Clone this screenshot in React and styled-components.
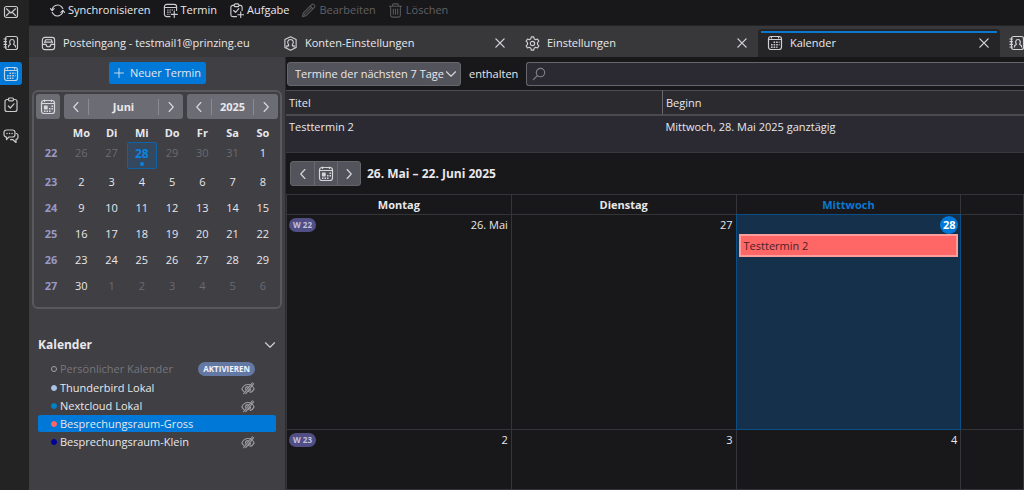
import { useState } from "react";
import styled, { createGlobalStyle, css } from "styled-components";

const GlobalStyle = createGlobalStyle`
  * {
    box-sizing: border-box;
  }

  body {
    margin: 0;
    background: #18181a;
    color: #e8e8ec;
    font-family: "Open Sans", "Noto Sans", sans-serif;
    font-size: 11px;
    line-height: 16px;
  }

  button, input, select {
    font: inherit;
    color: inherit;
  }

  button {
    padding: 0;
    border: none;
    background: none;
    cursor: pointer;
  }
`;

// Icons
const Svg = styled.svg`
  flex: none;
  display: block;
  width: ${(p) => p.$size || 16}px;
  height: ${(p) => p.$size || 16}px;
  fill: none;
  stroke: currentColor;
  stroke-width: ${(p) => p.$weight || 1.2};
  stroke-linecap: round;
  stroke-linejoin: round;
  opacity: 0.88;
`;

const Icon = ({ size, weight, children }) => (
  <Svg viewBox="0 0 16 16" $size={size} $weight={weight} aria-hidden="true">
    {children}
  </Svg>
);

const MailIcon = () => (
  <Icon>
    <rect x="1.5" y="2.5" width="13" height="11" rx="2" />
    <path d="M3.5 4.8 8 9l4.5-4.2M3.5 11.5l3-3M12.5 11.5l-3-3" />
  </Icon>
);

const BookIcon = () => (
  <Icon>
    <rect x="2.5" y="1.5" width="12" height="13" rx="2" />
    <path d="M1 4h2.5M1 6.7h2.5M1 9.4h2.5M1 12h2.5" />
    <path d="M5.5 12v-.8c0-1.2 1.4-1.2 1.9-2C6.3 8 6.3 4.5 9 4.5S11.7 8 10.6 9.2c.5.8 1.9.8 1.9 2v.8" />
  </Icon>
);

const CalendarIcon = () => (
  <Icon>
    <rect x="1.5" y="1.5" width="13" height="13" rx="2.5" />
    <path d="M1.5 4.5h13M4.5 2v1M11.5 2v1" />
    <path
      strokeWidth="1.6"
      strokeLinecap="butt"
      strokeDasharray="1.6 1"
      d="M6.5 7.2h6M4 9.7h8.5M4 12.2h6.5"
    />
  </Icon>
);

const TodayIcon = () => (
  <Icon>
    <rect x="1.5" y="1.5" width="13" height="13" rx="2.5" />
    <path d="M1.5 4.5h13M4.5 1v1.5M11.5 1v1.5" />
    <rect x="4.5" y="7.2" width="2.6" height="2.6" fill="currentColor" />
    <path
      strokeWidth="1.5"
      strokeLinecap="butt"
      strokeDasharray="1.5 1"
      d="M11.5 7.2h1.5M9 9.7h4M4 12.2h6.5"
    />
  </Icon>
);

const TaskIcon = () => (
  <Icon>
    <path d="M5 2.5H4a2 2 0 0 0-2 2v8a2 2 0 0 0 2 2h8a2 2 0 0 0 2-2v-8a2 2 0 0 0-2-2h-1" />
    <rect x="5.5" y="1" width="5" height="2.8" rx="1" />
    <path d="m5.3 9 2 2 3.7-4.2" />
  </Icon>
);

const ChatIcon = () => (
  <Icon>
    <path d="M3.5 2h6A2.5 2.5 0 0 1 12 4.5v2A2.5 2.5 0 0 1 9.5 9H6l-2.5 2.5V9A2.5 2.5 0 0 1 1 6.5v-2A2.5 2.5 0 0 1 3.5 2Z" />
    <path d="M4 5.5h.1M6.5 5.5h.1M9 5.5h.1" strokeWidth="1.4" />
    <path d="M13.5 5.5c1 .3 1.5 1.1 1.5 2v1.7c0 1.2-.8 2-2 2.2v3.1l-3-2.8H7.5" />
  </Icon>
);

const SyncIcon = () => (
  <Icon size={15}>
    <path d="M2.3 8a5.8 5.8 0 0 1 9.9-4.1L13.7 6M13.7 8a5.8 5.8 0 0 1-9.9 4.1L2.3 10" />
    <path d="m.5 6 1.8 2L4.4 6M11.6 10l2.1-2 1.8 2" />
  </Icon>
);

const NewEventIcon = () => (
  <Icon size={15}>
    <path d="M7.5 14.5H4A2.5 2.5 0 0 1 1.5 12V4A2.5 2.5 0 0 1 4 1.5h8A2.5 2.5 0 0 1 14.5 4v4" />
    <path d="M1.5 4.8h13M12 9v6.5M8.8 12.2h6.5" />
    <path strokeLinecap="butt" strokeDasharray="1.4 1" d="M4.5 7.5h8M4.5 9.7h4.5M4.5 12h3" />
  </Icon>
);

const NewTaskIcon = () => (
  <Icon size={15}>
    <path d="M5 2.5H4a2 2 0 0 0-2 2v8a2 2 0 0 0 2 2h4M11 2.5h1a2 2 0 0 1 2 2V8" />
    <rect x="5.5" y="1" width="5" height="2.8" rx="1" />
    <path d="m5 8 2 2 3.5-4M12.5 9.5v6M9.5 12.5h6" />
  </Icon>
);

const PencilIcon = () => (
  <Icon size={15}>
    <path d="m1.5 14.5 1-4 8.8-8.8a1.6 1.6 0 0 1 2.4 0l.6.6a1.6 1.6 0 0 1 0 2.4L5.5 13.5ZM9.8 3.2l3 3M3.5 12.5l7-7" />
  </Icon>
);

const TrashIcon = () => (
  <Icon size={15}>
    <path d="M1.5 3.5h13M5 3.5V2a1 1 0 0 1 1-1h4a1 1 0 0 1 1 1v1.5M2.8 3.5V13a2 2 0 0 0 2 2h6.4a2 2 0 0 0 2-2V3.5M5.7 6.5V12M8 6.5V12M10.3 6.5V12" />
  </Icon>
);

const InboxIcon = () => (
  <Icon size={15}>
    <rect x="1.5" y="1.5" width="13" height="13" rx="2.5" />
    <path d="M1.5 9h4c0 1.5 1 2.5 2.5 2.5s2.5-1 2.5-2.5h4M3.8 7 5 4h6l1.2 3M4 6.500h8" />
  </Icon>
);

const AccountIcon = () => (
  <Icon size={15}>
    <path d="m8 .8 6 3v8.4l-6 3-6-3V3.8Z" />
    <path d="M4 12v-1.5h2V9.3C4.2 7.5 4.8 3.7 8 3.7s3.8 3.8 2 5.6v1.2h2V12" />
  </Icon>
);

const GearIcon = () => (
  <Icon size={15}>
    <path d="M6.7 1h2.6l.5 2 1.5.9 2-.7 1.5 2.3L13.3 7v2l1.5 1.5-1.5 2.3-2-.7-1.5.9-.5 2H6.7l-.5-2-1.5-.9-2 .7-1.5-2.3L2.7 9V7L1.2 5.5l1.5-2.3 2 .7L6.2 3Z" />
    <circle cx="8" cy="8" r="2.3" />
  </Icon>
);

const CloseIcon = () => (
  <Icon size={12} weight={1.8}>
    <path d="m2.5 2.5 11 11M13.5 2.5l-11 11" />
  </Icon>
);

const PlusIcon = () => (
  <Icon size={12} weight={1.3}>
    <path d="M8 2v12M2 8h12" />
  </Icon>
);

const ChevronLeft = () => (
  <Icon size={12} weight={1.5}>
    <path d="M10.5 2 5 8l5.5 6" />
  </Icon>
);

const ChevronRight = () => (
  <Icon size={12} weight={1.5}>
    <path d="M5.5 2 11 8l-5.5 6" />
  </Icon>
);

const ChevronDown = () => (
  <Icon size={12} weight={1.5}>
    <path d="m2 5 6 6 6-6" />
  </Icon>
);

const SearchIcon = () => (
  <Icon size={14} weight={1.3}>
    <circle cx="9.7" cy="6.3" r="4.8" />
    <path d="m6 10-4.5 4.5" />
  </Icon>
);

const HiddenIcon = () => (
  <Icon size={14} weight={1.3}>
    <path d="M1 9c1.5-3.5 4-5 7-5s5.5 1.5 7 5c-1 2-2.5 3.5-4.5 4M1 9c.6 1.2 1.3 2.2 2.3 3" />
    <path d="M3 14.5 13 2M5.5 14.5 14.5 3M5 9.5a3 3 0 0 1 3-3M8.5 12A3 3 0 0 0 11 9.5" />
  </Icon>
);

// Window
const Window = styled.div`
  display: flex;
  height: 100vh;
  overflow: hidden;
`;

const Rail = styled.nav`
  flex: none;
  display: flex;
  flex-direction: column;
  gap: 8px;
  width: 29px;
  background: #232324;
`;

const RailButton = styled.button`
  display: flex;
  align-items: center;
  justify-content: center;
  width: 22px;
  height: 23px;
  border-radius: 0 3px 3px 0;
  color: #e0e0e3;
  background: ${(p) => (p.$active ? "#0078d7" : "transparent")};
`;

const Content = styled.div`
  flex: 1;
  min-width: 0;
  display: flex;
  flex-direction: column;
`;

const Toolbar = styled.div`
  flex: none;
  display: flex;
  align-items: flex-start;
  gap: 12px;
  height: 26px;
  padding: 2px 21px;
  border-bottom: 1px solid #242426;
`;

const ToolButton = styled.button`
  display: flex;
  align-items: center;
  gap: 3px;
  height: 16px;

  &:disabled {
    color: #606063;
    cursor: default;
  }
`;

const TabStrip = styled.div`
  flex: none;
  display: flex;
  height: 31px;
  padding: 3px 0 0 3px;
  background: #38383a;
  overflow: hidden;
`;

const Tab = styled.div`
  flex: none;
  display: flex;
  align-items: center;
  width: 242px;
  padding: 0 10px 0 9px;
  border-radius: 4px 4px 0 0;
  background: ${(p) => (p.$active ? "#252527" : "transparent")};
  ${(p) =>
    p.$active &&
    css`
      background-image: linear-gradient(#0a78cf, #0a78cf);
      background-repeat: no-repeat;
      background-size: calc(100% - 6px) 2px;
      background-position: 3px 2px;
    `}
`;

const TabLabel = styled.button`
  flex: 1;
  display: flex;
  align-items: center;
  gap: 7px;
  text-align: left;
`;

const Columns = styled.div`
  flex: 1;
  min-height: 0;
  display: flex;
`;

// Sidebar
const Sidebar = styled.aside`
  flex: none;
  width: 257px;
  padding: 5px 3px 0;
  background: #3f3f44;
  border-right: 1px solid #2c2c30;
`;

const NewEventButton = styled.button`
  display: flex;
  align-items: center;
  justify-content: center;
  gap: 5px;
  width: 97px;
  height: 22px;
  margin: 0 auto 6px;
  border-radius: 2px;
  background: #0078d7;
`;

const MiniMonth = styled.section`
  height: 219px;
  padding: 2px;
  border: 2px solid #58585d;
  border-radius: 6px;
`;

const MiniHeader = styled.div`
  display: flex;
  gap: 4px;
  height: 25px;
`;

const MiniTodayButton = styled.button`
  display: flex;
  align-items: center;
  justify-content: center;
  width: 24px;
  border-radius: 3px;
  background: #6c6c74;
`;

const Stepper = styled.div`
  flex: ${(p) => p.$grow};
  display: flex;
  align-items: center;
  border-radius: 3px;
  background: #6c6c74;
  font-weight: 700;

  span {
    flex: 1;
    text-align: center;
    border: solid #8b8b92;
    border-width: 0 1px;
  }

  button {
    display: flex;
    justify-content: center;
    width: 24px;
  }
`;

const MiniTable = styled.table`
  width: 100%;
  margin-top: 5px;
  table-layout: fixed;
  border-collapse: collapse;
  text-align: center;

  th, td {
    height: 26px;
    padding: 0;
  }

  thead th {
    height: 18px;
  }

  tbody tr:first-child > * {
    height: 27px;
    padding-top: 3px;
    vertical-align: top;
  }

  tbody tr:first-child > td:has(div) {
    padding-top: 0;
  }

  tbody th {
    color: #9a98c4;
  }
`;

const Day = styled.td`
  color: ${(p) => (p.$other ? "#6b6b70" : "inherit")};
`;

const TodayCell = styled.div`
  display: flex;
  flex-direction: column;
  align-items: center;
  height: 27px;
  padding-top: 3px;
  border: 1px solid #0f62a6;
  border-radius: 2px;
  background: #34485f;
  color: #0a84e0;
  font-size: 12px;
  font-weight: 700;

  &::after {
    content: "";
    width: 4px;
    height: 4px;
    border-radius: 50%;
    background: currentColor;
  }
`;

const CalendarListHeader = styled.div`
  display: flex;
  align-items: center;
  justify-content: space-between;
  margin: 27px 6px 6px;
  font-weight: 700;
  font-size: 12px;
  line-height: 18px;
`;

const CalendarList = styled.ul`
  display: grid;
  gap: 1px;
  margin: 0 6px;
  padding: 0;
  list-style: none;
`;

const CalendarItem = styled.li`
  display: flex;
  align-items: center;
  gap: 3px;
  height: 17px;
  padding: 0 21px 0 13px;
  border-radius: 2px;
  color: ${(p) => (p.$disabled ? "#76767c" : "inherit")};
  background: ${(p) => (p.$selected ? "#0078d7" : "transparent")};

  &:first-child {
    height: 18px;
  }

  span {
    flex: 1;
  }

  button {
    color: #a8a8ad;
  }
`;

const Dot = styled.i`
  width: 6px;
  height: 6px;
  border-radius: 50%;
  border: 1px solid ${(p) => p.$color || "#a4a4a8"};
  background: ${(p) => p.$color || "transparent"};
`;

const ActivateButton = styled.button`
  && {
    padding: 0 5px;
    border-radius: 7px;
    background: #6478a4;
    color: #f2f4fa;
    font-size: 8px;
    font-weight: 700;
    line-height: 14px;
  }
`;

// Main pane
const Main = styled.main`
  flex: 1;
  min-width: 0;
  display: flex;
  flex-direction: column;
`;

const FilterBar = styled.div`
  flex: none;
  display: flex;
  align-items: center;
  gap: 8px;
  height: 33px;
  padding: 1px 0 0 1px;
`;

const SelectBox = styled.div`
  position: relative;
  width: 174px;

  svg {
    position: absolute;
    top: 6px;
    right: 4px;
    pointer-events: none;
  }
`;

const Select = styled.select`
  appearance: none;
  width: 100%;
  height: 24px;
  padding: 0 7px;
  border: 1px solid #66666d;
  border-radius: 3px;
  background: #53535b;
`;

const SearchBox = styled.label`
  flex: 1;
  display: flex;
  align-items: center;
  gap: 6px;
  height: 24px;
  padding: 0 5px;
  border: 1px solid #66666d;
  border-right: none;
  border-radius: 3px 0 0 3px;
  background: #2b2a33;
  color: #8c8c92;

  input {
    flex: 1;
    border: none;
    outline: none;
    background: none;
  }
`;

const EventTable = styled.table`
  flex: none;
  width: 100%;
  table-layout: fixed;
  border-collapse: collapse;
  background: #2b2a33;
  border-top: 1px solid #4c4c52;
  border-bottom: 1px solid #38383d;

  th, td {
    padding: 3px;
    text-align: left;
    vertical-align: top;
    font-weight: 400;
  }

  th {
    height: 24px;
    padding-top: 4px;
    padding-bottom: 2px;
    border-bottom: 2px solid #4a4a50;
    background: #2a2a2f;
  }

  th:first-child {
    width: 51%;
    border-right: 1px solid #68686e;
  }

  td {
    height: 38px;
  }
`;

const NavBar = styled.div`
  flex: none;
  display: flex;
  align-items: center;
  gap: 6px;
  height: 41px;
  padding: 0 4px;
  font-size: 12px;
  font-weight: 700;
`;

const NavGroup = styled.div`
  display: flex;
  border: 1px solid #63636a;
  border-radius: 3px;
  background: #53535b;

  button {
    display: flex;
    align-items: center;
    justify-content: center;
    width: 23px;
    height: 23px;
  }

  button + button {
    border-left: 1px solid #68686f;
  }
`;

const MonthTable = styled.table`
  flex: 1;
  width: 100%;
  table-layout: fixed;
  border-collapse: collapse;

  tbody tr:first-child {
    height: 215px;
  }
`;

const DayHead = styled.th`
  width: ${(p) => (p.$rest ? "auto" : "30.5%")};
  height: 20px;
  padding: 0;
  border: 1px solid #353539;
  color: ${(p) => (p.$today ? "#0a78cf" : "inherit")};
`;

const DayCell = styled.td`
  padding: 0 2px;
  vertical-align: top;
  border: ${(p) => (p.$today ? "1px double #0c4f87" : "1px solid #353539")};
  background: ${(p) => (p.$today ? "#14304a" : "transparent")};
`;

const DayTop = styled.div`
  display: flex;
  align-items: center;
  justify-content: space-between;
  height: 19px;

  time {
    margin-left: auto;
    padding-right: 1px;
  }
`;

const TodayBadge = styled.b`
  width: 18px;
  height: 18px;
  margin-left: auto;
  border-radius: 50%;
  background: #0078d7;
  color: #fff;
  line-height: 18px;
  text-align: center;
`;

const WeekPill = styled.span`
  padding: 0 4px;
  border-radius: 7px;
  background: #504e84;
  color: #c3c2dc;
  font-size: 8px;
  font-weight: 700;
  line-height: 14px;
`;

const EventButton = styled.button`
  display: block;
  width: 100%;
  height: 23px;
  padding: 0 3px;
  border: 2px solid #ff9c9c;
  background: #ff6666;
  color: #4a2226;
  text-align: left;
`;

const rail = [
  ["E-Mail", MailIcon],
  ["Adressbuch", BookIcon],
  ["Kalender", CalendarIcon],
  ["Aufgaben", TaskIcon],
  ["Chat", ChatIcon],
];

const tabs = [
  { label: "Posteingang - testmail1@prinzing.eu", icon: InboxIcon },
  { label: "Konten-Einstellungen", icon: AccountIcon, closable: true },
  { label: "Einstellungen", icon: GearIcon, closable: true },
  { label: "Kalender", icon: CalendarIcon, closable: true },
  { label: "", icon: BookIcon },
];

const weekdays = ["Mo", "Di", "Mi", "Do", "Fr", "Sa", "So"];

const weeks = [
  { week: 22, days: [26, 27, 28, 29, 30, 31, 1] },
  { week: 23, days: [2, 3, 4, 5, 6, 7, 8] },
  { week: 24, days: [9, 10, 11, 12, 13, 14, 15] },
  { week: 25, days: [16, 17, 18, 19, 20, 21, 22] },
  { week: 26, days: [23, 24, 25, 26, 27, 28, 29] },
  { week: 27, days: [30, 1, 2, 3, 4, 5, 6] },
];

// days of May and July that fill up the first and last row
const isOtherMonth = (week, day) =>
  (week === 22 && day > 1) || (week === 27 && day < 30);

const calendars = [
  { name: "Persönlicher Kalender", disabled: true },
  { name: "Thunderbird Lokal", color: "#a8c2e8", hidden: true },
  { name: "Nextcloud Lokal", color: "#0082c9", hidden: true },
  { name: "Besprechungsraum-Gross", color: "#ff6666" },
  { name: "Besprechungsraum-Klein", color: "#00009c", hidden: true },
];

export default function App() {
  const [selected, setSelected] = useState("Besprechungsraum-Gross");
  const [activeTab, setActiveTab] = useState(3);
  const [query, setQuery] = useState("");

  return (
    <Window>
      <GlobalStyle />
      <Rail>
        {rail.map(([name, RailIcon]) => (
          <RailButton key={name} aria-label={name} $active={name === "Kalender"}>
            <RailIcon />
          </RailButton>
        ))}
      </Rail>

      <Content>
        <Toolbar>
          <ToolButton><SyncIcon />Synchronisieren</ToolButton>
          <ToolButton><NewEventIcon />Termin</ToolButton>
          <ToolButton><NewTaskIcon />Aufgabe</ToolButton>
          <ToolButton disabled><PencilIcon />Bearbeiten</ToolButton>
          <ToolButton disabled><TrashIcon />Löschen</ToolButton>
        </Toolbar>

        <TabStrip>
          {tabs.map(({ label, icon: TabIcon, closable }, i) => (
            <Tab key={i} $active={i === activeTab}>
              <TabLabel aria-label={label || "Adressbuch"} onClick={() => setActiveTab(i)}>
                <TabIcon />
                {label}
              </TabLabel>
              {closable && <button aria-label="Schließen"><CloseIcon /></button>}
            </Tab>
          ))}
        </TabStrip>

        <Columns>
          <Sidebar>
            <NewEventButton><PlusIcon />Neuer Termin</NewEventButton>
            <MiniMonth>
              <MiniHeader>
                <MiniTodayButton aria-label="Heute"><TodayIcon /></MiniTodayButton>
                <Stepper $grow={119}>
                  <button aria-label="Voriger Monat"><ChevronLeft /></button>
                  <span>Juni</span>
                  <button aria-label="Nächster Monat"><ChevronRight /></button>
                </Stepper>
                <Stepper $grow={91}>
                  <button aria-label="Voriges Jahr"><ChevronLeft /></button>
                  <span>2025</span>
                  <button aria-label="Nächstes Jahr"><ChevronRight /></button>
                </Stepper>
              </MiniHeader>
              <MiniTable>
                <thead>
                  <tr>
                    <th />
                    {weekdays.map((d) => <th key={d}>{d}</th>)}
                  </tr>
                </thead>
                <tbody>
                  {weeks.map(({ week, days }) => (
                    <tr key={week}>
                      <th>{week}</th>
                      {days.map((day) => (
                        <Day key={day} $other={isOtherMonth(week, day)}>
                          {week === 22 && day === 28 ? <TodayCell>{day}</TodayCell> : day}
                        </Day>
                      ))}
                    </tr>
                  ))}
                </tbody>
              </MiniTable>
            </MiniMonth>

            <CalendarListHeader>
              Kalender
              <button aria-label="Liste einklappen"><ChevronDown /></button>
            </CalendarListHeader>
            <CalendarList>
              {calendars.map((cal) => (
                <CalendarItem
                  key={cal.name}
                  $disabled={cal.disabled}
                  $selected={cal.name === selected}
                  onClick={() => setSelected(cal.name)}
                >
                  <Dot $color={cal.color} />
                  <span>{cal.name}</span>
                  {cal.disabled && <ActivateButton>AKTIVIEREN</ActivateButton>}
                  {cal.hidden && <button aria-label="Einblenden"><HiddenIcon /></button>}
                </CalendarItem>
              ))}
            </CalendarList>
          </Sidebar>

          <Main>
            <FilterBar>
              <SelectBox>
                <Select id="range" aria-label="Zeitraum">
                  <option>Termine der nächsten 7 Tage</option>
                </Select>
                <ChevronDown />
              </SelectBox>
              <label htmlFor="search">enthalten</label>
              <SearchBox>
                <SearchIcon />
                <input id="search" value={query} onChange={(e) => setQuery(e.target.value)} />
              </SearchBox>
            </FilterBar>

            <EventTable>
              <thead>
                <tr>
                  <th>Titel</th>
                  <th>Beginn</th>
                </tr>
              </thead>
              <tbody>
                <tr>
                  <td>Testtermin 2</td>
                  <td>Mittwoch, 28. Mai 2025 ganztägig</td>
                </tr>
              </tbody>
            </EventTable>

            <NavBar>
              <NavGroup>
                <button aria-label="Zurück"><ChevronLeft /></button>
                <button aria-label="Heute"><TodayIcon /></button>
                <button aria-label="Weiter"><ChevronRight /></button>
              </NavGroup>
              26. Mai – 22. Juni 2025
            </NavBar>

            <MonthTable>
              <thead>
                <tr>
                  <DayHead>Montag</DayHead>
                  <DayHead>Dienstag</DayHead>
                  <DayHead $today>Mittwoch</DayHead>
                  <DayHead $rest />
                </tr>
              </thead>
              <tbody>
                <tr>
                  <DayCell>
                    <DayTop><WeekPill>W 22</WeekPill><time>26. Mai</time></DayTop>
                  </DayCell>
                  <DayCell><DayTop><time>27</time></DayTop></DayCell>
                  <DayCell $today>
                    <DayTop><TodayBadge>28</TodayBadge></DayTop>
                    <EventButton>Testtermin 2</EventButton>
                  </DayCell>
                  <DayCell />
                </tr>
                <tr>
                  <DayCell>
                    <DayTop><WeekPill>W 23</WeekPill><time>2</time></DayTop>
                  </DayCell>
                  <DayCell><DayTop><time>3</time></DayTop></DayCell>
                  <DayCell><DayTop><time>4</time></DayTop></DayCell>
                  <DayCell />
                </tr>
              </tbody>
            </MonthTable>
          </Main>
        </Columns>
      </Content>
    </Window>
  );
}
